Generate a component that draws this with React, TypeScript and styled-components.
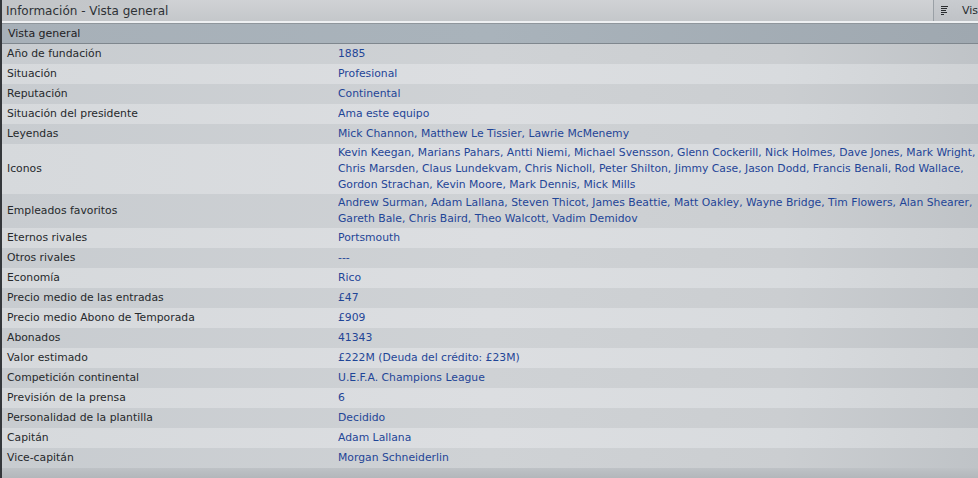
import React from 'react'
import styled, { createGlobalStyle } from 'styled-components'

const GlobalStyle = createGlobalStyle`
  html, body {
    margin: 0;
    padding: 0;
    width: 978px;
    height: 478px;
    overflow: hidden;
    background: #b9bdc1;
    font-family: "DejaVu Sans", "Liberation Sans", sans-serif;
  }
`

type Item = { label: string; value: string[] }

const items: Item[] = [
  { label: 'Año de fundación', value: ['1885'] },
  { label: 'Situación', value: ['Profesional'] },
  { label: 'Reputación', value: ['Continental'] },
  { label: 'Situación del presidente', value: ['Ama este equipo'] },
  { label: 'Leyendas', value: ['Mick Channon, Matthew Le Tissier, Lawrie McMenemy'] },
  {
    label: 'Iconos',
    value: [
      'Kevin Keegan, Marians Pahars, Antti Niemi, Michael Svensson, Glenn Cockerill, Nick Holmes, Dave Jones, Mark Wright,',
      'Chris Marsden, Claus Lundekvam, Chris Nicholl, Peter Shilton, Jimmy Case, Jason Dodd, Francis Benali, Rod Wallace,',
      'Gordon Strachan, Kevin Moore, Mark Dennis, Mick Mills',
    ],
  },
  {
    label: 'Empleados favoritos',
    value: [
      'Andrew Surman, Adam Lallana, Steven Thicot, James Beattie, Matt Oakley, Wayne Bridge, Tim Flowers, Alan Shearer,',
      'Gareth Bale, Chris Baird, Theo Walcott, Vadim Demidov',
    ],
  },
  { label: 'Eternos rivales', value: ['Portsmouth'] },
  { label: 'Otros rivales', value: ['---'] },
  { label: 'Economía', value: ['Rico'] },
  { label: 'Precio medio de las entradas', value: ['£47'] },
  { label: 'Precio medio Abono de Temporada', value: ['£909'] },
  { label: 'Abonados', value: ['41343'] },
  { label: 'Valor estimado', value: ['£222M (Deuda del crédito: £23M)'] },
  { label: 'Competición continental', value: ['U.E.F.A. Champions League'] },
  { label: 'Previsión de la prensa', value: ['6'] },
  { label: 'Personalidad de la plantilla', value: ['Decidido'] },
  { label: 'Capitán', value: ['Adam Lallana'] },
  { label: 'Vice-capitán', value: ['Morgan Schneiderlin'] },
]

const Frame = styled.div`
  display: flex;
  flex-direction: column;
  width: 978px;
  height: 478px;
  border-left: 2px solid #34373b;
  box-sizing: border-box;
  background: linear-gradient(90deg, #bfc3c7 0%, #c9cdd0 45%, #cdd0d3 65%, #b9bdc1 100%);
`

const TitleBar = styled.div`
  display: flex;
  align-items: stretch;
  height: 21px;
  flex-shrink: 0;
  background: linear-gradient(180deg, #d0d2d5 0%, #c4c7ca 100%);
  border-bottom: 2px solid #eef0f2;
  box-shadow: 0 1px 0 #8f969c;
`

const Title = styled.div`
  flex: 1;
  display: flex;
  align-items: center;
  padding-left: 4px;
  font-size: 12px;
  color: #2e3236;
  background: linear-gradient(90deg, #c2c5c8 0%, #c5c8cb 17%, transparent 18%);
`

const Tab = styled.div`
  display: flex;
  align-items: center;
  gap: 13px;
  width: 37px;
  padding-left: 7px;
  border-left: 1px solid #9aa0a6;
  font-size: 11px;
  color: #2a2d30;
  white-space: nowrap;
  overflow: hidden;
  background: linear-gradient(180deg, #c9ccd0 0%, #bfc2c6 100%);
`

const SectionHeader = styled.div`
  display: flex;
  align-items: center;
  height: 19px;
  margin-top: 1px;
  padding-left: 6px;
  flex-shrink: 0;
  font-size: 11px;
  color: #1e2124;
  background: linear-gradient(90deg, #a7b0b8 0%, #a9b3bb 50%, #9fa8b0 100%);
  border-bottom: 1px solid #7f878e;
`

const Row = styled.div<{ $alt: boolean }>`
  display: flex;
  align-items: center;
  min-height: 20px;
  padding: 1px 0;
  box-sizing: border-box;
  font-size: 10.8px;
  line-height: 16px;
  background: ${({ $alt }) =>
    $alt
      ? 'linear-gradient(90deg, #d6d9dc 0%, #dcdee1 50%, #d8dbde 80%, #cfd2d5 100%)'
      : 'linear-gradient(90deg, #c8ccd0 0%, #cfd2d5 50%, #cbced1 80%, #bfc3c7 100%)'};
`

const Label = styled.div`
  width: 331px;
  padding-left: 5px;
  color: #26292c;
  flex-shrink: 0;
`

const Value = styled.div`
  flex: 1;
  min-width: 0;
  color: #1f4597;
  white-space: nowrap;
  overflow: hidden;
`

const Filler = styled.div`
  flex: 1;
  background: linear-gradient(180deg, #bec2c6 0%, #b3b7bb 100%);
`

const IconBox = styled.svg`
  flex-shrink: 0;
`

const ListIcon = () => (
  <IconBox width="8" height="11" viewBox="0 0 8 11">
    <g stroke="#2a2d30" strokeWidth="1">
      <line x1="0" y1="1.5" x2="7" y2="1.5" />
      <line x1="0" y1="3.5" x2="6" y2="3.5" />
      <line x1="0" y1="5.5" x2="5" y2="5.5" />
      <line x1="0" y1="7.5" x2="6" y2="7.5" />
      <line x1="0" y1="9.5" x2="3" y2="9.5" />
    </g>
  </IconBox>
)

export default function App() {
  return (
    <>
      <GlobalStyle />
      <Frame>
        <TitleBar>
          <Title>Información - Vista general</Title>
          <Tab>
            <ListIcon />
            Vista
          </Tab>
        </TitleBar>
        <SectionHeader>Vista general</SectionHeader>
        {items.map((item, i) => (
          <Row key={item.label} $alt={i % 2 === 1}>
            <Label>{item.label}</Label>
            <Value>
              {item.value.map((line) => (
                <div key={line}>{line}</div>
              ))}
            </Value>
          </Row>
        ))}
        <Filler />
      </Frame>
    </>
  )
}
